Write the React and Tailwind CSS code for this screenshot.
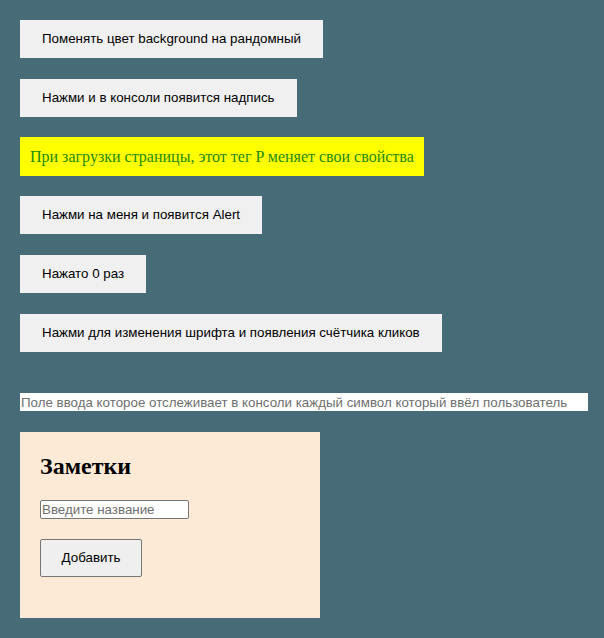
import React, { useState } from 'react';

const btn =
    "self-start h-[38px] px-[22px] bg-[#f0f0f0] text-black text-[13.333px] font-['Liberation_Sans',Arial,sans-serif] leading-none";

export default function App() {
    const [count, setCount] = useState(0);
    const [title, setTitle] = useState('');

    return (
        <div className="min-h-[638px] bg-[#476b77] p-5 flex flex-col">
            <button className={btn}>Поменять цвет background на рандомный</button>
            <button className={`${btn} mt-[21px]`}>Нажми и в консоли появится надпись</button>
            <p className="mt-5 self-start bg-[#ffff00] text-[#1f8a14] text-[16px] leading-[19px] py-[10px] pl-[10px] pr-[10px] font-['Liberation_Serif','Times_New_Roman',serif]">
                При загрузки страницы, этот тег P меняет свои свойства
            </p>
            <button className={`${btn} mt-5`}>Нажми на меня и появится Alert</button>
            <button className={`${btn} mt-[21px]`} onClick={() => setCount(count + 1)}>
                Нажато {count} раз
            </button>
            <button className={`${btn} mt-[21px]`}>Нажми для изменения шрифта и появления счётчика кликов</button>

            <input
                className="mt-[41px] h-[18px] w-[568px] bg-white px-px text-[13.333px] leading-none outline-none placeholder:text-[#6f6f6f] font-['Liberation_Sans',Arial,sans-serif]"
                placeholder="Поле ввода которое отслеживает в консоли каждый символ который ввёл пользователь"
            />

            <div className="mt-[21px] w-[300px] bg-[#fcead6] pt-5 px-5 pb-[41px] flex flex-col">
                <h2 className="text-[24px] leading-[28px] font-bold text-black font-['Liberation_Serif','Times_New_Roman',serif]">
                    Заметки
                </h2>
                <input
                    value={title}
                    onChange={(e) => setTitle(e.target.value)}
                    className="mt-5 h-[19px] w-[149px] bg-white border border-[#767676] rounded-[2px] px-px text-[13.333px] leading-none outline-none placeholder:text-[#6f6f6f] font-['Liberation_Sans',Arial,sans-serif]"
                    placeholder="Введите название"
                />
                <button className="mt-5 self-start h-[38px] w-[102px] bg-[#efefef] border border-[#767676] rounded-[2px] text-[13.333px] text-black font-['Liberation_Sans',Arial,sans-serif]">
                    Добавить
                </button>
            </div>
        </div>
    );
}
